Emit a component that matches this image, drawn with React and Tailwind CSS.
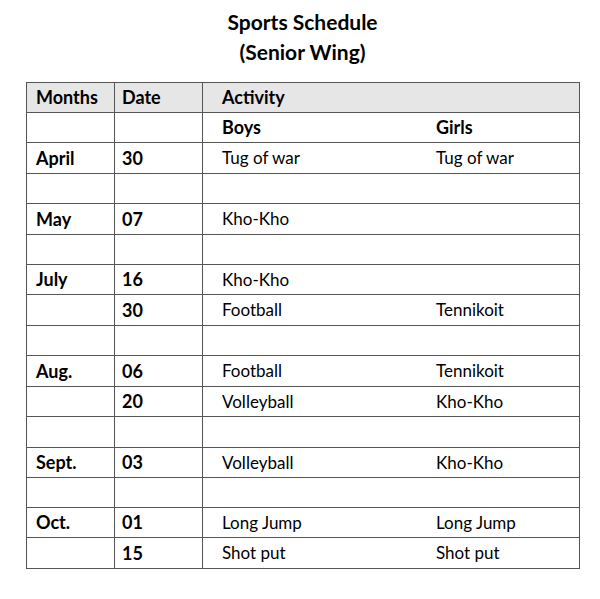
import React from 'react';

const rows = [
  { month: '', date: '', boys: 'Boys', girls: 'Girls', head: true, h: 30 },
  { month: 'April', date: '30', boys: 'Tug of war', girls: 'Tug of war', h: 31 },
  { month: '', date: '', boys: '', girls: '', h: 30 },
  { month: 'May', date: '07', boys: 'Kho-Kho', girls: '', h: 31 },
  { month: '', date: '', boys: '', girls: '', h: 30 },
  { month: 'July', date: '16', boys: 'Kho-Kho', girls: '', h: 30 },
  { month: '', date: '30', boys: 'Football', girls: 'Tennikoit', h: 31 },
  { month: '', date: '', boys: '', girls: '', h: 30 },
  { month: 'Aug.', date: '06', boys: 'Football', girls: 'Tennikoit', h: 31 },
  { month: '', date: '20', boys: 'Volleyball', girls: 'Kho-Kho', h: 30 },
  { month: '', date: '', boys: '', girls: '', h: 31 },
  { month: 'Sept.', date: '03', boys: 'Volleyball', girls: 'Kho-Kho', h: 30 },
  { month: '', date: '', boys: '', girls: '', h: 30 },
  { month: 'Oct.', date: '01', boys: 'Long Jump', girls: 'Long Jump', h: 30 },
  { month: '', date: '15', boys: 'Shot put', girls: 'Shot put', h: 30 },
];

export default function App() {
  return (
    <div
      className="w-[600px] h-[599px] bg-white text-black"
      style={{ fontFamily: 'Lato, "Open Sans", sans-serif' }}
    >
      {/* Title */}
      <div className="h-[82px] pt-[7px] pl-[5px] text-center font-bold text-[21px] leading-[30px]">
        <div>Sports Schedule</div>
        <div>(Senior Wing)</div>
      </div>

      {/* Schedule table */}
      <div className="ml-[26px] w-[554px] border border-[#555] text-[17px]">
        <div className="flex h-[30px] bg-[#e6e6e6] border-b border-[#555] font-bold text-[18px]">
          <div className="w-[88px] pl-[9px] flex items-center border-r border-[#555]">Months</div>
          <div className="w-[88px] pl-[7px] flex items-center border-r border-[#555]">Date</div>
          <div className="flex-1 pl-[19px] flex items-center">Activity</div>
        </div>
        {rows.map((r, i) => (
          <div
            key={i}
            className={
              'flex ' + (i < rows.length - 1 ? 'border-b border-[#555]' : '')
            }
            style={{ height: r.h }}
          >
            <div className="w-[88px] pl-[9px] flex items-center border-r border-[#555] font-bold text-[18px]">
              {r.month}
            </div>
            <div className="w-[88px] pl-[7px] flex items-center border-r border-[#555] font-bold text-[18px]">
              {r.date}
            </div>
            <div className={'flex-1 flex items-center pl-[19px] ' + (r.head ? 'font-bold text-[18px]' : '')}>
              <div className="w-[214px]">{r.boys}</div>
              <div>{r.girls}</div>
            </div>
          </div>
        ))}
      </div>
    </div>
  );
}
